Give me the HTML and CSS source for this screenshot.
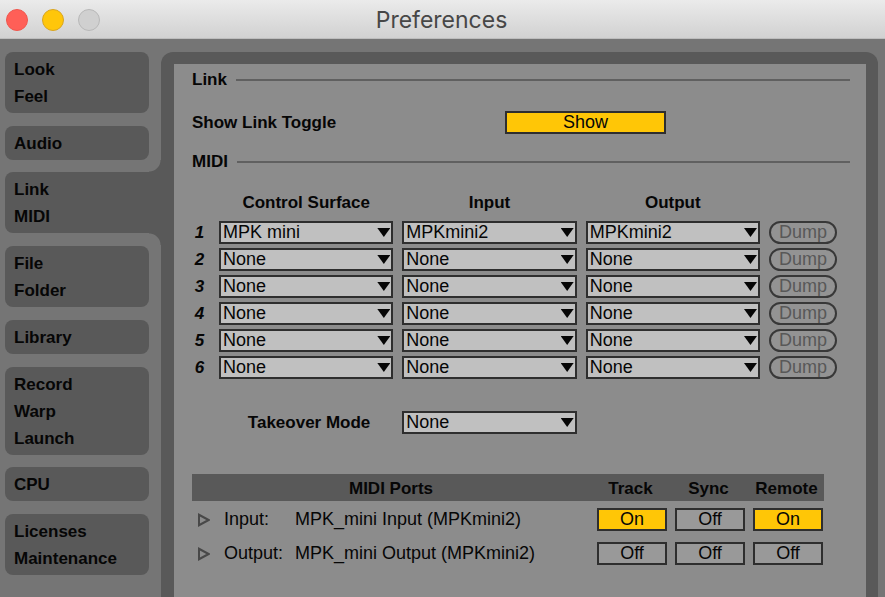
FILE: index.html
```html
<!DOCTYPE html>
<html lang="en">
<head>
<meta charset="utf-8">
<title>Preferences</title>
<link rel="stylesheet" href="styles.css">
</head>
<body>
<header class="titlebar">
  <div class="lights">
    <button class="light light-close" type="button" aria-label="Close"></button>
    <button class="light light-minimize" type="button" aria-label="Minimize"></button>
    <button class="light light-zoom" type="button" aria-label="Zoom" disabled></button>
  </div>
  <h1>Preferences</h1>
</header>
<div class="window">
  <nav class="tabs">
    <button class="tab" type="button"><span>Look</span><span>Feel</span></button>
    <button class="tab" type="button"><span>Audio</span></button>
    <button class="tab tab-active" type="button" aria-current="page"><span>Link</span><span>MIDI</span></button>
    <button class="tab" type="button"><span>File</span><span>Folder</span></button>
    <button class="tab" type="button"><span>Library</span></button>
    <button class="tab" type="button"><span>Record</span><span>Warp</span><span>Launch</span></button>
    <button class="tab" type="button"><span>CPU</span></button>
    <button class="tab" type="button"><span>Licenses</span><span>Maintenance</span></button>
  </nav>
  <div class="frame">
    <main class="page">
      <h2 class="section">Link</h2>
      <div class="toggle-row">
        <span id="link-toggle-label">Show Link Toggle</span>
        <button class="switch switch-on" type="button" aria-labelledby="link-toggle-label">Show</button>
      </div>
      <h2 class="section">MIDI</h2>
      <div class="grid grid-head">
        <span></span><span id="surface">Control Surface</span><span id="input">Input</span><span id="output">Output</span>
      </div>
      <div class="surfaces">
        <div class="grid">
          <span class="number">1</span>
          <div class="picker"><select aria-labelledby="surface"><option>MPK mini</option><option>None</option></select></div>
          <div class="picker"><select aria-labelledby="input"><option>MPKmini2</option><option>None</option></select></div>
          <div class="picker"><select aria-labelledby="output"><option>MPKmini2</option><option>None</option></select></div>
          <button class="dump" type="button" disabled>Dump</button>
        </div>
        <div class="grid">
          <span class="number">2</span>
          <div class="picker"><select aria-labelledby="surface"><option>None</option></select></div>
          <div class="picker"><select aria-labelledby="input"><option>None</option></select></div>
          <div class="picker"><select aria-labelledby="output"><option>None</option></select></div>
          <button class="dump" type="button" disabled>Dump</button>
        </div>
        <div class="grid">
          <span class="number">3</span>
          <div class="picker"><select aria-labelledby="surface"><option>None</option></select></div>
          <div class="picker"><select aria-labelledby="input"><option>None</option></select></div>
          <div class="picker"><select aria-labelledby="output"><option>None</option></select></div>
          <button class="dump" type="button" disabled>Dump</button>
        </div>
        <div class="grid">
          <span class="number">4</span>
          <div class="picker"><select aria-labelledby="surface"><option>None</option></select></div>
          <div class="picker"><select aria-labelledby="input"><option>None</option></select></div>
          <div class="picker"><select aria-labelledby="output"><option>None</option></select></div>
          <button class="dump" type="button" disabled>Dump</button>
        </div>
        <div class="grid">
          <span class="number">5</span>
          <div class="picker"><select aria-labelledby="surface"><option>None</option></select></div>
          <div class="picker"><select aria-labelledby="input"><option>None</option></select></div>
          <div class="picker"><select aria-labelledby="output"><option>None</option></select></div>
          <button class="dump" type="button" disabled>Dump</button>
        </div>
        <div class="grid">
          <span class="number">6</span>
          <div class="picker"><select aria-labelledby="surface"><option>None</option></select></div>
          <div class="picker"><select aria-labelledby="input"><option>None</option></select></div>
          <div class="picker"><select aria-labelledby="output"><option>None</option></select></div>
          <button class="dump" type="button" disabled>Dump</button>
        </div>
      </div>
      <div class="grid takeover">
        <span></span>
        <label for="takeover">Takeover Mode</label>
        <div class="picker"><select id="takeover"><option>None</option></select></div>
      </div>
      <table class="ports">
        <thead>
          <tr><th scope="col">MIDI Ports</th><th class="state" scope="col">Track</th><th class="state" scope="col">Sync</th><th class="state" scope="col">Remote</th></tr>
        </thead>
        <tbody>
          <tr>
            <td>
              <div class="port">
                <button class="expand" type="button" aria-label="Expand input"><svg viewBox="0 0 12 14"><path d="M1 1.8v10.4L10.6 7z"/></svg></button>
                <span>Input:</span><span>MPK_mini Input (MPKmini2)</span>
              </div>
            </td>
            <td class="state"><button class="switch switch-on" type="button">On</button></td>
            <td class="state"><button class="switch" type="button">Off</button></td>
            <td class="state"><button class="switch switch-on" type="button">On</button></td>
          </tr>
          <tr>
            <td>
              <div class="port">
                <button class="expand" type="button" aria-label="Expand output"><svg viewBox="0 0 12 14"><path d="M1 1.8v10.4L10.6 7z"/></svg></button>
                <span>Output:</span><span>MPK_mini Output (MPKmini2)</span>
              </div>
            </td>
            <td class="state"><button class="switch" type="button">Off</button></td>
            <td class="state"><button class="switch" type="button">Off</button></td>
            <td class="state"><button class="switch" type="button">Off</button></td>
          </tr>
        </tbody>
      </table>
    </main>
  </div>
</div>
</body>
</html>
```
FILE: styles.css
```css
:root {
  --back: #757575;
  --dark: #595959;
  --page: #8c8c8c;
  --line: #2e2e2e;
  --yellow: #ffc606;
}

* {
  box-sizing: border-box;
}

body {
  display: flex;
  flex-direction: column;
  min-height: 100vh;
  margin: 0;
  background: var(--back);
  color: #060606;
  font: bold 17px/22px "Liberation Sans", Arial, sans-serif;
}

button,
select {
  margin: 0;
  padding: 0;
  border: 0;
  border-radius: 0;
  background: none;
  color: inherit;
  font: inherit;
}

/* Title bar */
.titlebar {
  display: grid;
  grid-template-columns: 1fr auto 1fr;
  align-items: center;
  height: 39px;
  padding: 2px 8px 0 6px;
  border-bottom: 1px solid #bdbdbd;
  background: linear-gradient(#ebebeb, #d1d1d1);
}

.titlebar h1 {
  margin: 0;
  color: #474747;
  font: 400 23px/28px Inter, sans-serif;
}

.lights {
  display: flex;
  gap: 14px;
}

.light {
  width: 22px;
  height: 22px;
  border: 1px solid;
  border-radius: 50%;
}

.light-close {
  border-color: #f0564d;
  background: #ff5f57;
}

.light-minimize {
  border-color: #d9a520;
  background: #ffc60a;
}

.light-zoom {
  border-color: #b8b8b8;
  background: #d0d0d0;
}

/* Tabs */
.window {
  display: flex;
  flex: 1;
  padding: 13px 7px 0 5px;
}

.tabs {
  display: flex;
  flex: none;
  flex-direction: column;
  justify-content: space-between;
  width: 156px;
  padding: 0 12px 22px 0;
}

.tab {
  position: relative;
  padding: 4px 9px 3px;
  border-radius: 8px;
  background: var(--dark);
  line-height: 27px;
  text-align: left;
}

.tab span {
  display: block;
}

.tab-active {
  margin-right: -12px;
  border-radius: 8px 0 0 8px;
}

.tab-active::before,
.tab-active::after {
  content: "";
  position: absolute;
  right: 0;
  width: 12px;
  height: 12px;
}

.tab-active::before {
  bottom: 100%;
  background: radial-gradient(circle at 0 0, transparent 11px, var(--dark) 12px);
}

.tab-active::after {
  top: 100%;
  background: radial-gradient(circle at 0 100%, transparent 11px, var(--dark) 12px);
}

/* Page */
.frame {
  display: flex;
  flex: 1;
  min-width: 0;
  padding: 12px 12px 0 13px;
  border-radius: 12px 12px 0 0;
  background: var(--dark);
}

.page {
  flex: 1;
  min-width: 0;
  padding: 5px 16px 0 18px;
  background: var(--page);
}

.section {
  display: flex;
  align-items: center;
  gap: 9px;
  margin: 0;
  font-size: 17px;
}

.section::after {
  content: "";
  flex: 1;
  height: 2px;
  background: #606060;
}

.toggle-row {
  display: grid;
  grid-template-columns: 313fr 161fr 184fr;
  align-items: center;
  margin: 20px 0 17px;
}

.switch {
  height: 23px;
  border: 2px solid var(--line);
  background: #999;
  font-size: 18px;
  font-weight: 400;
  line-height: 19px;
}

.switch-on {
  background: var(--yellow);
}

.grid {
  display: grid;
  grid-template-columns: 18px repeat(3, minmax(0, 1fr)) 68px;
  column-gap: 9px;
  align-items: center;
  padding-right: 13px;
}

.grid-head {
  margin: 19px 0 7px;
  text-align: center;
}

.surfaces {
  display: grid;
  row-gap: 4px;
}

.number {
  padding-right: 3px;
  font-style: italic;
  text-align: center;
}

.picker {
  position: relative;
  height: 23px;
}

.picker select {
  display: block;
  width: 100%;
  height: 23px;
  padding: 0 2px;
  border: 2px solid var(--line);
  appearance: none;
  background: #c0c0c0;
  font-size: 18px;
  font-weight: 400;
  line-height: 19px;
}

.picker::after {
  content: "";
  position: absolute;
  top: 7px;
  right: 3px;
  width: 13px;
  height: 9px;
  background: #060606;
  clip-path: polygon(0 0, 100% 0, 50% 100%);
  pointer-events: none;
}

.dump {
  height: 23px;
  border: 2px solid #383838;
  border-radius: 12px;
  background: #939393;
  color: #585858;
  font-size: 18px;
  font-weight: 400;
  line-height: 19px;
}

.takeover {
  margin: 32px 0 40px;
}

.takeover label {
  padding-right: 23px;
  text-align: right;
}

/* MIDI ports */
.ports {
  width: calc(100% - 26px);
  border-collapse: collapse;
  table-layout: fixed;
}

.ports th {
  padding: 2px 0 0;
  background: var(--dark);
  line-height: 25px;
  text-align: center;
}

.ports td {
  padding: 7px 0 4px;
}

.ports .state {
  width: 78px;
  padding-right: 1px;
  padding-left: 7px;
}

.ports th.state {
  padding-left: 4px;
}

.ports .switch {
  display: block;
  width: 100%;
}

.port {
  display: grid;
  grid-template-columns: 26px 71px 1fr;
  align-items: center;
  padding-left: 6px;
  font-size: 18px;
  font-weight: 400;
  line-height: 23px;
}

.expand {
  width: 12px;
  height: 14px;
}

.expand svg {
  display: block;
  width: 12px;
  height: 14px;
  fill: none;
  stroke: #484848;
  stroke-width: 2;
}
```
